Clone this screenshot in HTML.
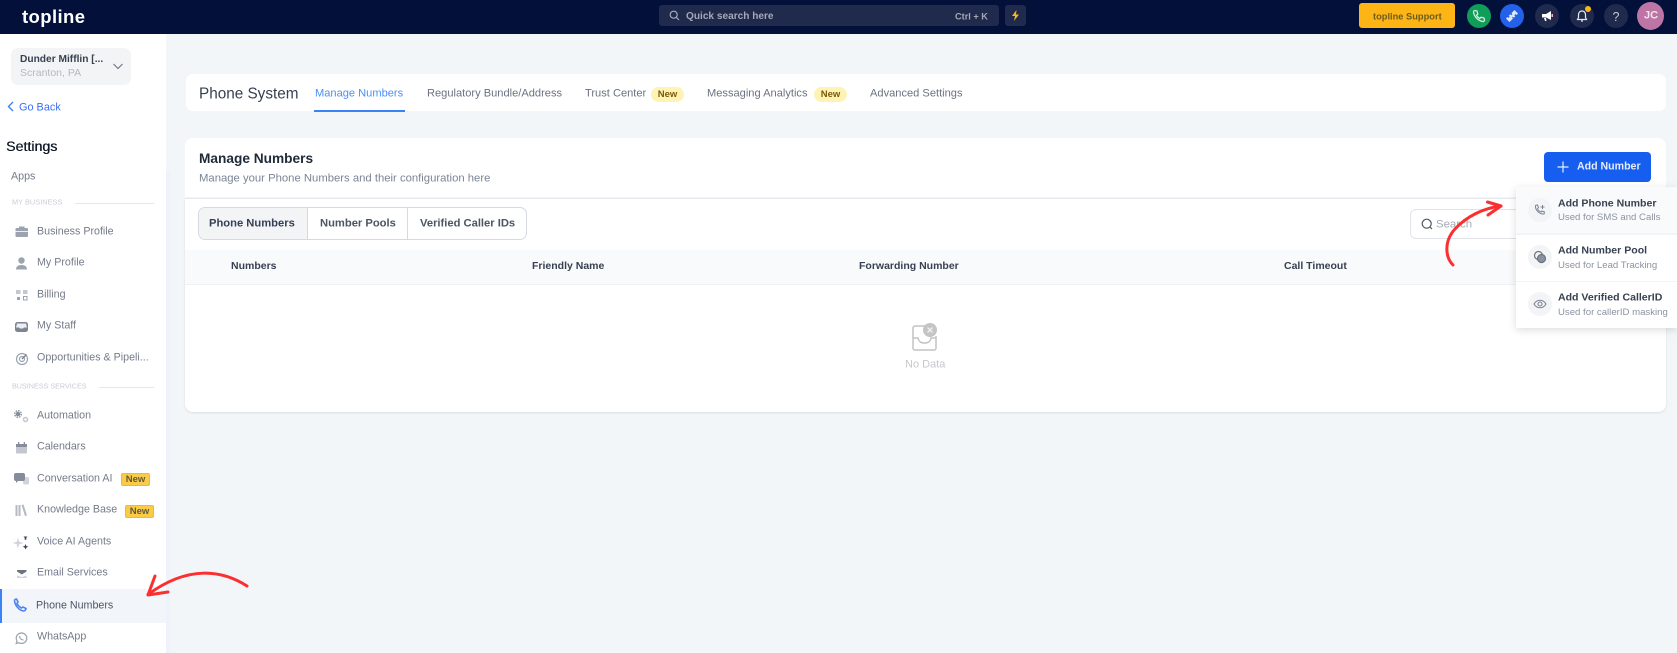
<!DOCTYPE html>
<html><head><meta charset="utf-8"><style>
html,body{margin:0;padding:0}
body{width:1677px;height:653px;overflow:hidden;background:#f2f6f9;font-family:"Liberation Sans",sans-serif;position:relative;filter:blur(.3px)}
.a{position:absolute}
.t{position:absolute;white-space:nowrap;transform:translateY(-50%);line-height:1;margin-top:1px}
.s{font-size:10.7px;color:#747b89;left:37px}
.c{position:absolute;width:24px;height:24px;border-radius:50%;background:#1f2a4d;top:4px}
.c svg{position:absolute;left:5px;top:5px;width:14px;height:14px}
.new{position:absolute;background:#fef3b5;color:#7a5a0a;font-size:9.5px;font-weight:bold;height:15px;line-height:15px;text-align:center;border-radius:8px;width:33px;top:87px}
.ny{position:absolute;background:#fbcb45;border:1px solid #eeb93a;color:#5f5a40;font-size:9.5px;font-weight:bold;height:11px;line-height:11px;text-align:center;border-radius:2px;width:27px}
.tab{font-size:11.1px;color:#6b7280;top:93px}
.th{font-size:10.5px;font-weight:bold;color:#374151;top:265px}
.seg{font-size:11.2px;font-weight:bold;top:223px;color:#4b5563}
.dt{font-size:10.55px;font-weight:bold;color:#374151;left:1558px}
.ds{font-size:9.6px;color:#8b93a1;left:1558px}
.di{position:absolute;left:1528px;width:24px;height:24px;border-radius:50%;background:#f3f4f6}
.di svg{position:absolute;left:5px;top:5px;width:14px;height:14px}
</style></head><body>

<!-- header -->
<div class="a" style="left:0;top:0;width:1677px;height:34px;background:#02103a"></div>
<div class="t" style="left:22px;top:16px;font-size:18.5px;font-weight:bold;color:#fff;letter-spacing:.4px">topline</div>
<div class="a" style="left:659px;top:5px;width:340px;height:21px;background:#1f2a4d;border-radius:3px"></div>
<svg class="a" style="left:669px;top:10px" width="11" height="11" viewBox="0 0 11 11" fill="none" stroke="#a3a9b8" stroke-width="1.2"><circle cx="4.7" cy="4.7" r="3.5"/><path d="M7.3 7.3L10 10"/></svg>
<div class="t" style="left:686px;top:15.5px;font-size:10.1px;font-weight:bold;color:#a3a9b8">Quick search here</div>
<div class="t" style="left:955px;top:16px;font-size:9.2px;font-weight:bold;color:#a3a9b8">Ctrl + K</div>
<div class="a" style="left:1005px;top:5px;width:21px;height:21px;background:#1f2a4d;border-radius:3px"></div>
<svg class="a" style="left:1010px;top:10px" width="11" height="11" viewBox="0 0 11 11"><path d="M6.5 0L2 6h3L4 11l5-6.5H6z" fill="#fbb714"/></svg>
<div class="a" style="left:1359px;top:3px;width:96px;height:25px;background:#fdb515;border-radius:3px"></div>
<div class="t" style="left:1373px;top:15.5px;font-size:9.3px;font-weight:bold;color:#6b5a1c">topline Support</div>
<div class="c" style="left:1467px;background:#0f9d58"><svg viewBox="0 0 14 14" fill="none" stroke="#cdeedd" stroke-width="1.3"><path d="M3 1.500l2 .5.800 3-1.300 1.200c.7 1.500 1.800 2.600 3.300 3.300L9 8.200l3 .8.500 2c0 1-1 1.800-2 1.500C6 11.500 2.500 8 1.500 3.500 1.300 2.500 2 1.500 3 1.500z"/></svg></div>
<div class="c" style="left:1500px;background:#2461ea"><svg viewBox="0 0 14 14" fill="#dbe6ff"><path d="M9.500 1l3.500 3.500-1.500 1.500-1-1-1.200 1.200 1 1-1.500 1.500-1-1L7 8.500l1 1L4.500 13 1 9.500 2.500 8l1 1 1.200-1.200-1-1L5.200 5.300l1 1L7.400 5.100l-1-1z"/></svg></div>
<div class="c" style="left:1535px"><svg viewBox="0 0 14 14" fill="#fff"><path d="M2 5h4l5-3v9L6 8.500H2z"/><path d="M4 9h2l.5 3H5z"/><rect x="11.500" y="5" width="1.500" height="3" fill="#f6b9c4"/></svg></div>
<div class="c" style="left:1570px"><svg viewBox="0 0 14 14" fill="none" stroke="#e5e7eb" stroke-width="1.2"><path d="M7 2c-2.500 0-3.500 2-3.500 4v2.500L2.500 10.500h9l-1-2V6c0-2-1-4-3.500-4zM6 12h2"/></svg></div>
<div class="a" style="left:1585px;top:6px;width:6px;height:6px;border-radius:50%;background:#fbb714"></div>
<div class="c" style="left:1604px"></div>
<div class="t" style="left:1612.5px;top:15.5px;font-size:12.5px;color:#c5c9d3">?</div>
<div class="a" style="left:1637px;top:2px;width:27px;height:28px;border-radius:50%;background:#bd75a6"></div>
<div class="t" style="left:1644px;top:15px;font-size:11px;font-weight:bold;color:#f3e4ee">JC</div>

<!-- sidebar -->
<div class="a" style="left:0;top:34px;width:166px;height:619px;background:#fff"></div>
<div class="a" style="left:166px;top:171px;width:4px;height:482px;background:#eff1fb"></div>
<div class="a" style="left:11px;top:48px;width:120px;height:37px;background:#f3f4f6;border-radius:7px"></div>
<div class="t" style="left:20px;top:58.5px;font-size:10.2px;font-weight:bold;color:#374151">Dunder Mifflin [...</div>
<div class="t" style="left:20px;top:71.5px;font-size:10.5px;color:#b4b9c2">Scranton, PA</div>
<svg class="a" style="left:113px;top:63px" width="10" height="7" viewBox="0 0 10 7" fill="none" stroke="#6b7280" stroke-width="1.1"><path d="M.5 1l4.500 4.500L9.500 1"/></svg>
<svg class="a" style="left:7px;top:101px" width="7" height="11" viewBox="0 0 7 11" fill="none" stroke="#3b82f6" stroke-width="1.4"><path d="M6 1L1.500 5.500 6 10"/></svg>
<div class="t" style="left:19px;top:106.5px;font-size:10.9px;color:#3b6ff0">Go Back</div>
<div class="t" style="left:6px;top:145.5px;font-size:14.2px;color:#111827;text-shadow:.3px 0 0 #111827">Settings</div>
<div class="t s" style="left:11px;top:176px">Apps</div>
<div class="t" style="left:12px;top:200.5px;font-size:7.4px;color:#c9ccd6">MY BUSINESS</div>
<div class="a" style="left:75px;top:203px;width:79px;height:1px;background:#e5e7eb"></div>
<div class="t" style="left:12px;top:384.5px;font-size:7.2px;color:#c9ccd6">BUSINESS SERVICES</div>
<div class="a" style="left:99px;top:387px;width:55px;height:1px;background:#e5e7eb"></div>

<div class="t s" style="top:231px">Business Profile</div>
<div class="t s" style="top:262px">My Profile</div>
<div class="t s" style="top:294px">Billing</div>
<div class="t s" style="top:325px">My Staff</div>
<div class="t s" style="top:357px">Opportunities &amp; Pipeli...</div>
<div class="t s" style="top:415px">Automation</div>
<div class="t s" style="top:446px">Calendars</div>
<div class="t s" style="top:478px">Conversation AI</div>
<div class="ny" style="left:121px;top:473px">New</div>
<div class="t s" style="top:509px">Knowledge Base</div>
<div class="ny" style="left:125px;top:505px">New</div>
<div class="t s" style="top:541px">Voice AI Agents</div>
<div class="t s" style="top:572px">Email Services</div>
<div class="a" style="left:0;top:589px;width:166px;height:34px;background:#f2f6fa"></div>
<div class="a" style="left:0;top:589px;width:2px;height:34px;background:#3b82f6"></div>
<div class="t s" style="left:36px;top:604.5px;color:#4b5563">Phone Numbers</div>
<div class="t s" style="top:636px">WhatsApp</div>

<svg class="a" style="left:0;top:0;pointer-events:none" width="40" height="653" viewBox="0 0 40 653">
<g fill="#9ca3af">
<rect x="15.5" y="228" width="12.500" height="9" rx="1"/><rect x="19" y="226.500" width="5.500" height="2.500"/><rect x="15.5" y="231" width="12.500" height=".8" fill="#fff"/>
<circle cx="21.5" cy="260.5" r="3.2"/><path d="M16 269.500c0-3 2.200-4.500 5.500-4.500s5.500 1.500 5.500 4.500z"/>
<rect x="16" y="290" width="4.500" height="4" fill="#c3c7d0"/><rect x="23" y="290" width="4.500" height="4" fill="#c3c7d0"/><rect x="17" y="297" width="3" height="3"/><rect x="23.500" y="296.500" width="3.500" height="3.500" fill="none" stroke="#9ca3af"/>
<rect x="15" y="322" width="13" height="10" rx="2.500" fill="#7d8492"/><path d="M17 323.500h9l1 4h-3l-1 1h-3l-1-1h-3z" fill="#eceef2"/>
<circle cx="18" cy="414" r="2.300" fill="#868c9a"/><circle cx="18" cy="414" r="3.300" fill="none" stroke="#868c9a" stroke-width="1.300" stroke-dasharray="1.500 1.100"/>
<circle cx="25.500" cy="419.500" r="2" fill="none" stroke="#c3c7d0" stroke-width="1.500"/>
<rect x="16" y="444" width="11" height="9.500" rx="1" fill="#c3c7d0"/><rect x="16" y="444" width="11" height="3" fill="#868c9a"/><rect x="18" y="442" width="1.300" height="3" fill="#868c9a"/><rect x="23.700" y="442" width="1.300" height="3" fill="#868c9a"/>
<rect x="23" y="477" width="6" height="7.500" rx="1.500" fill="#d1d5db"/><path d="M16 473h7a2 2 0 0 1 2 2v4a2 2 0 0 1-2 2h-5l-2 2v-2a2 2 0 0 1-2-2v-4a2 2 0 0 1 2-2z" fill="#868c9a"/>
<path d="M15.500 505h2v11h-2zM18.500 505h2v11h-2zM21.500 505l2-.5 3.500 11-2 .5z" fill="#b4b9c2"/>
<path d="M18 537.500l1.200 4.300 4.300 1.200-4.300 1.200-1.200 4.300-1.200-4.300-4.300-1.200 4.300-1.200z" fill="#d1d5db"/>
<path d="M23.500 536.500h4l-1.200 1.300v2h-1.600v-2zM25.500 544l.8 2 2 .8-2 .8-.8 2-.8-2-2-.8 2-.8z" fill="#374151"/>
<path d="M17 570h9.500v1.500l-4.700 3-4.800-3z" fill="#6b7280"/><path d="M17 575.500l4.800 1.500 4.700-1.500v2.500H17z" fill="#d1d5db"/>
</g>
<g fill="none" stroke="#9ca3af" stroke-width="1.2">
<circle cx="22" cy="359" r="5.500"/><circle cx="22" cy="359" r="2.500"/><path d="M22 359l4.500-4.500" stroke="#6b7280"/>
<path d="M21.500 633c3 0 5.300 2.300 5.300 5.200s-2.300 5.200-5.300 5.200c-1 0-1.800-.2-2.500-.7l-2.800.8.800-2.700c-.5-.8-.8-1.700-.8-2.600 0-2.900 2.300-5.200 5.300-5.200z"/><path d="M19.500 636c0 2 1.500 4 4 4"/>
</g>
<path d="M14.500 600.500c0-1 1-1.500 2-1.500l1.500 3-1 1.500c1 2 2.500 3.500 4.500 4.500l1.500-1 3 1.500c0 1-1 2.500-2.500 2.500-4-.5-8.500-5-9-10.500z" fill="none" stroke="#4f83ee" stroke-width="1.6"/>
</svg>

<!-- top card -->
<div class="a" style="left:186px;top:74px;width:1480px;height:37px;background:#fff;border-radius:7px"></div>
<div class="t" style="left:199px;top:93px;font-size:15.3px;color:#374151">Phone System</div>
<div class="t tab" style="left:315px;color:#4a90f5">Manage Numbers</div>
<div class="a" style="left:314px;top:110px;width:91px;height:2px;background:#3b82f6"></div>
<div class="t tab" style="left:427px">Regulatory Bundle/Address</div>
<div class="t tab" style="left:585px">Trust Center</div>
<div class="new" style="left:651px">New</div>
<div class="t tab" style="left:707px">Messaging Analytics</div>
<div class="new" style="left:814px">New</div>
<div class="t tab" style="left:870px">Advanced Settings</div>

<!-- main card -->
<div class="a" style="left:185px;top:138px;width:1481px;height:59px;background:#fff;border-radius:8px 8px 0 0"></div>
<div class="t" style="left:199px;top:157.5px;font-size:13.7px;font-weight:bold;color:#1f2937">Manage Numbers</div>
<div class="t" style="left:199px;top:177.5px;font-size:11.3px;color:#7b8494">Manage your Phone Numbers and their configuration here</div>
<div class="a" style="left:185px;top:198px;width:1481px;height:214px;background:#fff;border-radius:0 0 8px 8px;box-shadow:0 1px 2px rgba(0,0,0,.1);border-top:1px solid #e8eaef;box-sizing:border-box"></div>
<div class="a" style="left:198px;top:207px;width:329px;height:33px;border:1px solid #d5d9e2;border-radius:7px;box-sizing:border-box;overflow:hidden;background:#fff"><div class="a" style="left:0;top:0;width:108px;height:33px;background:#f3f4f6;border-right:1px solid #d5d9e2"></div><div class="a" style="left:208px;top:0;width:1px;height:33px;background:#d5d9e2"></div></div>
<div class="t seg" style="left:209px;color:#344054">Phone Numbers</div>
<div class="t seg" style="left:320px">Number Pools</div>
<div class="t seg" style="left:420px">Verified Caller IDs</div>
<div class="a" style="left:185px;top:250px;width:1481px;height:35px;background:#f9fafb;border-bottom:1px solid #f0f1f4;box-sizing:border-box"></div>
<div class="t th" style="left:231px">Numbers</div>
<div class="t th" style="left:532px">Friendly Name</div>
<div class="t th" style="left:859px">Forwarding Number</div>
<div class="t th" style="left:1284px">Call Timeout</div>
<svg class="a" style="left:912px;top:322px" width="28" height="30" viewBox="0 0 28 30" fill="none" stroke="#c4c4c4" stroke-width="1.5"><path d="M14 4H3a2 2 0 0 0-2 2v20a2 2 0 0 0 2 2h19a2 2 0 0 0 2-2V14"/><path d="M1 16l5 0c1 4 3 5 6.500 5s5.500-1 6.500-5h5"/><circle cx="18" cy="8" r="7" fill="#c4c4c4" stroke="none"/><path d="M15.500 5.500l5 5M20.500 5.500l-5 5" stroke="#f1f1f1" stroke-width="1.3"/></svg>
<div class="t" style="left:905px;top:364px;font-size:11px;color:#c4c7cd">No Data</div>

<!-- search -->
<div class="a" style="left:1410px;top:209px;width:120px;height:30px;border:1px solid #e2e4ea;border-radius:6px;box-sizing:border-box;background:#fff"></div>
<svg class="a" style="left:1421px;top:218px" width="12" height="12" viewBox="0 0 12 12" fill="none" stroke="#4b5563" stroke-width="1.2"><circle cx="5.700" cy="5.700" r="4.500"/><path d="M9 9l2 2"/></svg>
<div class="t" style="left:1436px;top:224px;font-size:11.4px;color:#a5aab5">Search</div>

<!-- add number -->
<div class="a" style="left:1544px;top:152px;width:107px;height:30px;background:#155eef;border-radius:4px"></div>
<svg class="a" style="left:1557px;top:161px" width="12" height="12" viewBox="0 0 12 12" stroke="#e6edff" stroke-width="1.2"><path d="M6 .5v11M.5 6h11"/></svg>
<div class="t" style="left:1577px;top:165.5px;font-size:10.6px;font-weight:bold;color:#e6edff">Add Number</div>

<!-- dropdown -->
<div class="a" style="left:1516px;top:187px;width:161px;height:141px;background:#fff;box-shadow:0 2px 8px rgba(0,0,0,.14)"></div>
<div class="a" style="left:1516px;top:187px;width:161px;height:46px;background:#f9fafb"></div>
<div class="a" style="left:1516px;top:280.5px;width:161px;height:1.5px;background:#f3f4f6"></div>
<div class="a" style="left:1516px;top:233px;width:161px;height:1.5px;background:#f3f4f6"></div>
<div class="di" style="top:198px"><svg viewBox="0 0 14 14" fill="none" stroke="#7b8494" stroke-width="1"><path d="M2.500 2.500l2-.5 1 2.500-1 1c.5 1.500 2 3 3.500 3.500l1-1 2.500 1-.5 2c-4.500.5-9-4-8.500-8.500zM9.500 2v4M7.500 4h4"/></svg></div>
<div class="di" style="top:245px"><svg viewBox="0 0 14 14" fill="none" stroke="#6b7280" stroke-width="1.2"><circle cx="5.500" cy="5.500" r="4"/><circle cx="8.500" cy="8.500" r="4" fill="#8b93a1"/></svg></div>
<div class="di" style="top:292px"><svg viewBox="0 0 14 14" fill="none" stroke="#7b8494" stroke-width="1.1"><path d="M1 7c3-5 9-5 12 0-3 5-9 5-12 0z"/><circle cx="7" cy="7" r="2"/></svg></div>
<div class="t dt" style="top:202.5px">Add Phone Number</div>
<div class="t ds" style="top:217px">Used for SMS and Calls</div>
<div class="t dt" style="top:249.5px">Add Number Pool</div>
<div class="t ds" style="top:264.5px">Used for Lead Tracking</div>
<div class="t dt" style="top:296.5px">Add Verified CallerID</div>
<div class="t ds" style="top:311.5px">Used for callerID masking</div>

<!-- arrows -->
<svg class="a" style="left:0;top:0;pointer-events:none" width="1677" height="653" viewBox="0 0 1677 653" fill="none" stroke="#fb2f2f" stroke-width="3" stroke-linecap="round" stroke-linejoin="round">
<path d="M1453 265C1445 257 1444 241 1455 229 1466 217 1483 208 1501 206"/>
<path d="M1487.500 202L1501 206 1488 215"/>
<path d="M247 586C222 570 188 565 148 594.500"/>
<path d="M155 576L148 595 168 592"/>
</svg>
</body></html>
